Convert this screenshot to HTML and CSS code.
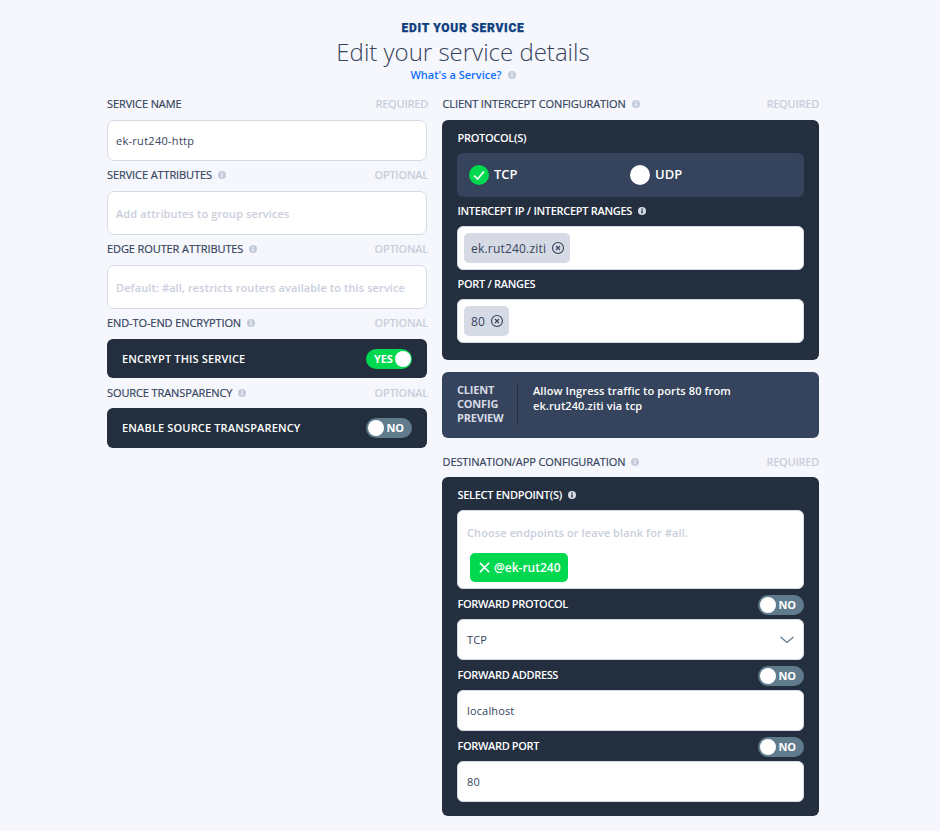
FILE: index.html
```html
<!DOCTYPE html>
<html lang="en">
<head>
<meta charset="utf-8">
<title>Edit your service</title>
<link rel="stylesheet" href="styles.css">
</head>
<body>
<svg class="defs" width="0" height="0" aria-hidden="true">
  <symbol id="info" viewBox="0 0 8 8"><circle cx="4" cy="4" r="4" fill="currentColor"/><rect x="3.3" y="3.4" width="1.4" height="3" fill="var(--ink,#fff)"/><rect x="3.3" y="1.5" width="1.4" height="1.3" fill="var(--ink,#fff)"/></symbol>
  <symbol id="close" viewBox="0 0 14 14"><circle cx="7" cy="7" r="5.5" fill="none" stroke="currentColor" stroke-width="1.1"/><path d="M5 5l4 4M9 5l-4 4" fill="none" stroke="currentColor" stroke-width="1.1"/></symbol>
</svg>
<main class="page">
  <header class="head">
    <div class="eyebrow">EDIT YOUR SERVICE</div>
    <h1 class="title">Edit your service details</h1>
    <div class="help"><a class="help-link">What's a Service?</a><svg class="info info-light"><use href="#info"/></svg></div>
  </header>
  <div class="columns">
    <section class="col col-left">
      <div class="row first"><span class="lab">SERVICE NAME</span><span class="req">REQUIRED</span></div>
      <div class="field h41">ek-rut240-http</div>
      <div class="row"><span class="lab">SERVICE ATTRIBUTES<svg class="info info-light"><use href="#info"/></svg></span><span class="req">OPTIONAL</span></div>
      <div class="field h44 ph">Add attributes to group services</div>
      <div class="row"><span class="lab">EDGE ROUTER ATTRIBUTES<svg class="info info-light"><use href="#info"/></svg></span><span class="req">OPTIONAL</span></div>
      <div class="field h44 ph">Default: #all, restricts routers available to this service</div>
      <div class="row"><span class="lab">END-TO-END ENCRYPTION<svg class="info info-light"><use href="#info"/></svg></span><span class="req">OPTIONAL</span></div>
      <div class="switchbar h39"><span>ENCRYPT THIS SERVICE</span><span class="toggle on"><b>YES</b><i></i></span></div>
      <div class="row row-low"><span class="lab">SOURCE TRANSPARENCY<svg class="info info-light"><use href="#info"/></svg></span><span class="req">OPTIONAL</span></div>
      <div class="switchbar h40"><span class="raised">ENABLE SOURCE TRANSPARENCY</span><span class="toggle"><i></i><b>NO</b></span></div>
    </section>
    <section class="col col-right">
      <div class="row first"><span class="lab">CLIENT INTERCEPT CONFIGURATION<svg class="info info-light"><use href="#info"/></svg></span><span class="req">REQUIRED</span></div>
      <div class="panel panel-client">
        <div class="plabel p-protocol">PROTOCOL(S)</div>
        <div class="protocols">
          <div class="proto"><span class="radio checked"><svg viewBox="0 0 20 20"><path d="M5 10.500l3.500 3.500L15 6.500" fill="none" stroke="#fff" stroke-width="1.7"/></svg></span><span class="proto-name">TCP</span></div>
          <div class="proto"><span class="radio"></span><span class="proto-name">UDP</span></div>
        </div>
        <div class="plabel">INTERCEPT IP / INTERCEPT RANGES<svg class="info info-dark"><use href="#info"/></svg></div>
        <div class="chipbox"><span class="chip">ek.rut240.ziti<svg class="x"><use href="#close"/></svg></span></div>
        <div class="plabel">PORT / RANGES</div>
        <div class="chipbox"><span class="chip">80<svg class="x"><use href="#close"/></svg></span></div>
      </div>
      <div class="preview">
        <div class="preview-title">CLIENT<br>CONFIG<br>PREVIEW</div>
        <div class="preview-text">Allow Ingress traffic to ports 80 from ek.rut240.ziti via tcp</div>
      </div>
      <div class="row dest"><span class="lab">DESTINATION/APP CONFIGURATION<svg class="info info-light"><use href="#info"/></svg></span><span class="req">REQUIRED</span></div>
      <div class="panel panel-dest">
        <div class="plabel p-select">SELECT ENDPOINT(S)<svg class="info info-dark"><use href="#info"/></svg></div>
        <div class="endpoints">
          <div class="ep-ph">Choose endpoints or leave blank for #all.</div>
          <span class="tag"><svg viewBox="0 0 12 12"><path d="M1 1l10 10M11 1L1 11" fill="none" stroke="#fff" stroke-width="1.8"/></svg>@ek-rut240</span>
        </div>
        <div class="prow"><span class="prow-label">FORWARD PROTOCOL</span><span class="toggle small"><i></i><b>NO</b></span></div>
        <div class="pfield select">TCP<svg class="chev" viewBox="0 0 14 8"><path d="M.5 1l6.500 5.500L13.500 1" fill="none" stroke="#5f7b8c" stroke-width="1.3"/></svg></div>
        <div class="prow"><span class="prow-label">FORWARD ADDRESS</span><span class="toggle small"><i></i><b>NO</b></span></div>
        <div class="pfield">localhost</div>
        <div class="prow"><span class="prow-label">FORWARD PORT</span><span class="toggle small"><i></i><b>NO</b></span></div>
        <div class="pfield">80</div>
      </div>
    </section>
  </div>
</main>
</body>
</html>
```
FILE: styles.css
```css
* { box-sizing: border-box; }
html, body { margin: 0; padding: 0; }
body {
  background: #f5f7fc;
  color: #35445c;
  font-family: "Open Sans", "Noto Sans", sans-serif;
  font-size: 11px;
  height: 831px;
  overflow: hidden;
}
.defs { position: absolute; }
.page { width: 712px; margin-left: 107px; }
.head { text-align: center; padding-top: 21px; height: 97px; }
.eyebrow {
  font-family: Roboto, sans-serif;
  font-size: 12px;
  font-weight: 900;
  line-height: 14px;
  letter-spacing: .72px;
  color: #0d3f7f;
  -webkit-text-stroke: .25px #0d3f7f;
}
.title {
  margin: 0;
  font-size: 24px;
  font-weight: 300;
  line-height: 34px;
  color: #35445c;
}
.help {
  line-height: 14px;
  margin-top: -1px;
  font-size: 11px;
  font-weight: 600;
  display: flex;
  justify-content: center;
  align-items: center;
}
.help-link { color: #0f6fff; }
.columns { display: flex; gap: 15px; align-items: flex-start; }
.col-left { width: 320px; }
.col-right { width: 377px; }
.row {
  display: flex;
  justify-content: space-between;
  align-items: center;
  height: 15px;
  margin: 6px 0 9px;
  line-height: 15px;
}
.row.first { margin-top: -1px; }
.row.row-low { margin: 7px 0 8px; }
.row.dest { margin: 16px 0 8px; }
.lab {
  color: #35445c;
  display: flex;
  align-items: center;
  letter-spacing: -.1px;
  -webkit-text-stroke: .2px #35445c;
}
.req { color: #c9cedb; font-weight: 600; letter-spacing: -.25px; margin-right: -1px; }
.col-right .req { margin-right: 0; }
.col-right .lab, .plabel, .prow-label { padding-left: .5px; }
.info { width: 8px; height: 8px; margin-left: 6px; flex: none; }
.info-light { color: #c3cad9; --ink: #f5f7fc; }
.info-dark { color: #d5dae5; --ink: #232f3f; }
.field {
  display: flex;
  align-items: center;
  background: #fff;
  border: 1px solid #d5dae5;
  border-radius: 7px;
  padding: 0 8px;
  color: #35445c;
  font-size: 11px;
  letter-spacing: .28px;
}
.h41 { height: 41px; }
.h44 { height: 44px; }
.h39 { height: 39px; }
.h40 { height: 40px; }
.field.ph { color: #c9cedb; padding-top: 1px; font-weight: 600; letter-spacing: .1px; }
.switchbar {
  display: flex;
  justify-content: space-between;
  align-items: center;
  background: #232f3f;
  border-radius: 6px;
  padding: 0 15px;
  color: #fff;
  font-weight: 600;
  letter-spacing: .15px;
}
.raised { margin-bottom: 2px; }
.toggle {
  display: inline-flex;
  align-items: center;
  gap: 3px;
  width: 46px;
  height: 20px;
  border-radius: 10px;
  background: #5f7b8c;
  color: #fff;
  padding: 0 0 0 1.500px;
  font-size: 11px;
  font-weight: 700;
  line-height: 20px;
  letter-spacing: -.1px;
}
.toggle i { width: 16px; height: 16px; border-radius: 50%; background: #fff; display: block; flex: none; }
.toggle b { font-weight: 700; }
.toggle.on { background: #00d84f; padding: 0 0 0 8px; gap: 2px; }
.panel {
  background: #232f3f;
  border-radius: 6px;
  padding: 0 15px;
  color: #fff;
}
.panel-client { height: 240px; padding-top: 10px; }
.panel-dest { height: 339px; padding-top: 10px; }
.plabel {
  display: flex;
  align-items: center;
  height: 15px;
  line-height: 15px;
  margin: 6px 0 8px;
  font-weight: 600;
  color: #fff;
  letter-spacing: -.3px;
}
.plabel.p-protocol, .plabel.p-select { margin-top: 0; }
.protocols {
  display: flex;
  height: 44px;
  background: #35445c;
  border-radius: 6px;
  padding: 0 12px;
  align-items: center;
}
.proto {
  display: flex;
  align-items: center;
  gap: 5px;
  width: 161px;
  font-size: 13px;
  font-weight: 600;
}
.proto-name { margin-bottom: 2px; }
.radio { width: 20px; height: 20px; border-radius: 50%; background: #fff; display: block; flex: none; }
.radio svg { width: 20px; height: 20px; display: block; }
.radio.checked { background: #00d84f; }
.chipbox {
  height: 44px;
  background: #fff;
  border: 1px solid #d5dae5;
  border-radius: 6px;
  padding: 6px;
  display: flex;
  align-items: center;
}
.chip {
  display: inline-flex;
  align-items: center;
  height: 30px;
  background: #d5dae5;
  border-radius: 5px;
  padding: 0 5px 0 7px;
  color: #35445c;
  font-size: 12px;
  letter-spacing: .2px;
}
.x { width: 14px; height: 14px; margin-left: 4.500px; color: #35445c; }
.preview {
  display: flex;
  align-items: flex-start;
  height: 66px;
  margin-top: 12px;
  padding: 11px 15px 0;
  background: #35445c;
  border-radius: 6px;
  color: #fff;
  font-weight: 600;
}
.preview-title {
  width: 61px;
  height: 42px;
  line-height: 14px;
  border-right: 1px solid #232f3f;
  color: #d5dae5;
  font-weight: 700;
  letter-spacing: -.2px;
}
.preview-text { margin-left: 15px; width: 225px; line-height: 15px; letter-spacing: .1px; }
.endpoints {
  height: 79px;
  background: #fff;
  border: 1px solid #d5dae5;
  border-radius: 6px;
  padding: 14px 9px 0;
}
.ep-ph { color: #c9cedb; font-weight: 600; line-height: 15px; letter-spacing: .1px; }
.tag {
  display: inline-flex;
  align-items: center;
  height: 29px;
  margin: 13px 0 0 3px;
  padding: 0 7px 0 9px;
  background: #00d84f;
  border-radius: 5px;
  color: #fff;
  font-weight: 600;
  font-size: 12px;
}
.tag svg { width: 11px; height: 11px; margin-right: 4px; }
.prow {
  display: flex;
  justify-content: space-between;
  align-items: center;
  height: 20px;
  margin: 6px 0 4px;
  font-weight: 600;
  letter-spacing: -.35px;
}
.prow-label { margin-bottom: 3px; }
.pfield {
  display: flex;
  align-items: center;
  justify-content: space-between;
  height: 41px;
  background: #fff;
  border: 1px solid #d5dae5;
  border-radius: 6px;
  padding: 0 9px;
  color: #35445c;
  letter-spacing: .15px;
}
.chev { width: 14px; height: 8px; }
```
